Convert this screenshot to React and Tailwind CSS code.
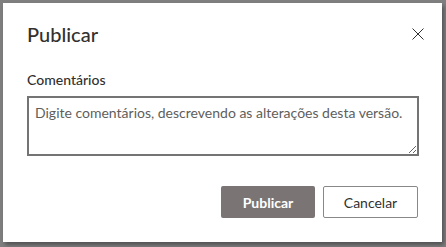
import React from "react";

const font = { fontFamily: 'Lato, "Open Sans", sans-serif' };

export default function App() {
  return (
    <div className="w-[446px] h-[247px] bg-[#7f7f7f] pt-[3px] pl-[3px]" style={font}>
      {/* Dialog */}
      <div className="w-[439px] h-[239px] bg-white shadow-[2px_3px_4px_rgba(0,0,0,0.35)] flex flex-col px-[24px] pt-[17px] pb-[24px]">
        <div className="flex items-start justify-between">
          <h1 className="text-[20px] leading-[28px] font-medium text-[#323130]">Publicar</h1>
          <button className="mt-[8px] mr-[-6px] w-[12px] h-[12px] text-[#323130]">
            <svg viewBox="0 0 12 12" width="12" height="12" fill="none" stroke="currentColor" strokeWidth="1">
              <path d="M0.5 0.5 L11.5 11.5 M11.5 0.5 L0.5 11.5" />
            </svg>
          </button>
        </div>

        <label className="mt-[22px] text-[14px] leading-[20px] font-medium text-[#323130]">Comentários</label>
        <textarea
          className="mt-[6px] w-[392px] h-[60px] border-2 border-[#747474] px-[6px] pt-[5px] text-[14px] leading-[20px] text-[#323130] placeholder:text-[#605e5c] outline-none"
          placeholder="Digite comentários, descrevendo as alterações desta versão."
        />

        <div className="mt-auto flex justify-end gap-[8px]">
          <button className="w-[94px] h-[32px] bg-[#7a7574] text-white text-[14px] font-bold rounded-[2px]">
            Publicar
          </button>
          <button className="w-[95px] h-[32px] bg-white border border-[#8a8886] text-[#323130] text-[14px] rounded-[2px]">
            Cancelar
          </button>
        </div>
      </div>
    </div>
  );
}
